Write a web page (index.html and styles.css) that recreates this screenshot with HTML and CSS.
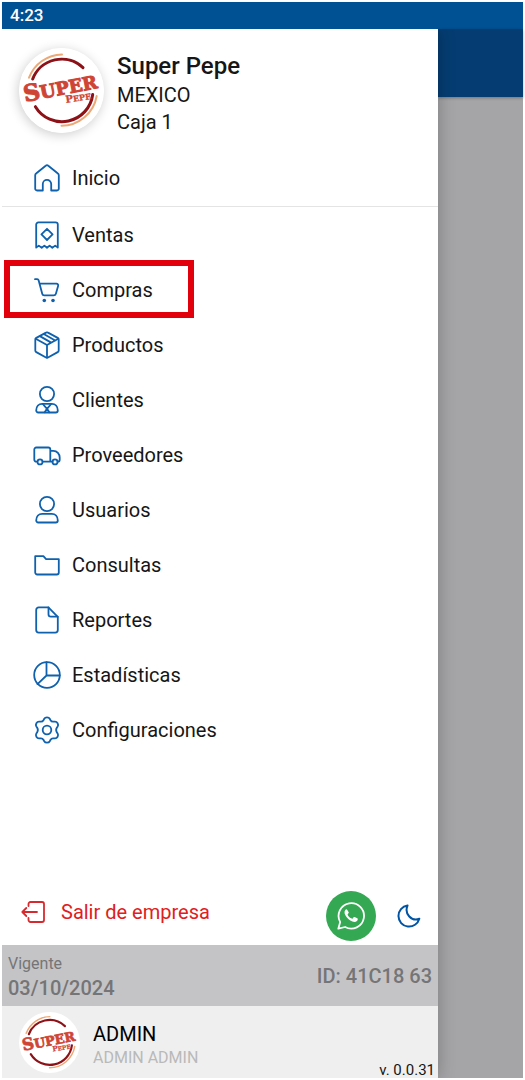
FILE: index.html
```html
<!DOCTYPE html>
<html lang="es">
<head>
  <meta charset="UTF-8">
  <meta name="viewport" content="width=device-width, initial-scale=1.0">
  <title>Super Pepe</title>
  <link rel="stylesheet" href="styles.css">
</head>
<body>

  <div class="screen">
    <div class="status-bar">4:23</div>

    <div class="main">
      <aside class="drawer">
        <header class="company">
          <svg class="company-logo" viewBox="0 0 85 85" role="img" aria-label="Super Pepe">
            <circle cx="42.5" cy="42.5" r="42.5" fill="#fff"/>
            <path class="logo-ring" d="M13.7 31A31 31 0 0 1 64 19.7M16.4 58.7A31 31 0 0 0 73.7 46.5"/>
            <path class="logo-arc" d="M10 29.7A36 36 0 0 1 43 6.4M77.7 48A36 36 0 0 1 42.5 77.8"/>
            <text class="logo-super" transform="translate(6 54) rotate(-11)"><tspan class="logo-cap">S</tspan>UPER</text>
            <text class="logo-pepe" transform="translate(47 55) rotate(-9)"><tspan class="logo-pepe-cap">P</tspan>EPE</text>
          </svg>
          <div class="company-info">
            <h1>Super Pepe</h1>
            <p>MEXICO</p>
            <p>Caja 1</p>
          </div>
        </header>

        <nav class="menu">
          <a class="menu-item first" href="#inicio">
            <svg class="icon" viewBox="0 0 28 28"><path d="M9.8 26.5V20a4.2 4.2 0 0 1 8.4 0v6.5H24a1.8 1.8 0 0 0 1.8-1.8V11.2a2 2 0 0 0-.9-1.7L15.3 1.7a2 2 0 0 0-2.6 0L3.1 9.5a2 2 0 0 0-.9 1.7v13.5A1.8 1.8 0 0 0 4 26.5z"/></svg>
            Inicio
          </a>
          <a class="menu-item" href="#ventas">
            <svg class="icon" viewBox="0 0 28 28"><path d="M3.2 26.6V3.6a2.2 2.2 0 0 1 2.2-2.2h17.2a2.2 2.2 0 0 1 2.2 2.2v23l-2.6-2-2.9 2.2-2.7-2.2-2.6 2.2-2.6-2.2-2.7 2.2-2.9-2.2z"/><path d="M10.2 11.6 14 7.8l3.8 3.8M10.2 15.2 14 19l3.8-3.8M10.2 11.6l-1.8 1.8 1.8 1.8M17.8 11.6l1.8 1.8-1.8 1.8"/></svg>
            Ventas
          </a>
          <a class="menu-item highlighted" href="#compras">
            <svg class="icon" viewBox="0 0 28 28"><path d="M2 3.2h2.2a1.5 1.5 0 0 1 1.4 1.1L9.3 18a1.9 1.9 0 0 0 1.8 1.4h9.5a2.4 2.4 0 0 0 2.3-1.7l2.2-7.8a1.7 1.7 0 0 0-1.6-2.2H6.6"/><circle class="solid" cx="11.3" cy="24.5" r="1.8"/><circle class="solid" cx="20" cy="24.5" r="1.8"/></svg>
            Compras
          </a>
          <a class="menu-item" href="#productos">
            <svg class="icon" viewBox="0 0 28 28"><path d="M13 1.6a2 2 0 0 1 2 0l9.7 5.3a2 2 0 0 1 1 1.7v10.8a2 2 0 0 1-1 1.7L15 26.5a2 2 0 0 1-2 0l-9.700-5.400a2 2 0 0 1-1-1.700V8.600a2 2 0 0 1 1-1.700z"/><path d="M2.700 7.700 14 14l11.300-6.300M14 14v12.500M7.300 5.400l10.900 6.200M11.200 3.300l11 6.200"/></svg>
            Productos
          </a>
          <a class="menu-item" href="#clientes">
            <svg class="icon" viewBox="0 0 28 28"><circle cx="14" cy="8" r="7.100"/><path d="M3.200 24.500c0-4 2.500-6.700 6-6.700h9.600c3.500 0 6 2.700 6 6.700a2 2 0 0 1-2 2H5.200a2 2 0 0 1-2-2z"/><path d="M9.800 18c1.800 2 5 5 6.600 8.300M18.200 18c-1.800 2-5 5-6.600 8.300"/></svg>
            Clientes
          </a>
          <a class="menu-item" href="#proveedores">
            <svg class="icon" viewBox="0 0 28 28"><path d="M4.300 20.700h-1a2 2 0 0 1-2-2V8.500a2 2 0 0 1 2-2h12a2 2 0 0 1 2 2v12.200H9.700M17.300 9.800h3.200c3.500 0 6.200 3.400 6.200 6.700v2.200a2 2 0 0 1-2 2M19.500 20.700h-2.200"/><circle cx="7" cy="20.900" r="2.500"/><circle cx="22" cy="20.900" r="2.500"/></svg>
            Proveedores
          </a>
          <a class="menu-item" href="#usuarios">
            <svg class="icon" viewBox="0 0 28 28"><circle cx="14" cy="8" r="7.100"/><path d="M3.200 24.500c0-4 2.500-6.700 6-6.700h9.600c3.500 0 6 2.700 6 6.700a2 2 0 0 1-2 2H5.200a2 2 0 0 1-2-2z"/></svg>
            Usuarios
          </a>
          <a class="menu-item" href="#consultas">
            <svg class="icon" viewBox="0 0 28 28"><path d="M2.200 5.200h8.200l2.700 2.900h12.700v13.400a2 2 0 0 1-2 2H4.200a2 2 0 0 1-2-2z"/></svg>
            Consultas
          </a>
          <a class="menu-item" href="#reportes">
            <svg class="icon" viewBox="0 0 28 28"><path d="M5.700 1.400h9.700l9.400 9.400v13.300a2.500 2.500 0 0 1-2.500 2.500H5.700a2.500 2.500 0 0 1-2.500-2.500V3.900a2.500 2.500 0 0 1 2.500-2.500z"/><path d="M15.500 1.500v6.800a2.400 2.400 0 0 0 2.400 2.400h6.800"/></svg>
            Reportes
          </a>
          <a class="menu-item" href="#estadisticas">
            <svg class="icon" viewBox="0 0 28 28"><circle cx="14" cy="14" r="12.800"/><path d="M13.500 1.200v13.300h13.200M13.500 14.500l-9 8.600"/></svg>
            Estadísticas
          </a>
          <a class="menu-item" href="#configuraciones">
            <svg class="icon" viewBox="0 0 28 28"><path d="M11.200 2.800c1.100-2 4.500-2 5.600 0l.6 1.200c.6 1.100 1.800 1.800 3 1.700l1.500-.1c2.300-.1 4 2.800 2.800 4.800l-.8 1.200a4.400 4.400 0 0 0 0 4.800l.8 1.200c1.200 2-.5 4.900-2.800 4.800l-1.500-.1c-1.200-.1-2.400.6-3 1.700l-.6 1.200c-1.100 2-4.500 2-5.600 0l-.6-1.200c-.6-1.100-1.800-1.800-3-1.700l-1.500.1c-2.300.1-4-2.800-2.800-4.800l.8-1.200a4.400 4.400 0 0 0 0-4.800l-.8-1.200c-1.200-2 .5-4.900 2.800-4.800l1.500.1c1.200.1 2.400-.6 3-1.700z"/><circle cx="14" cy="14" r="4.300"/></svg>
            Configuraciones
          </a>
        </nav>

        <div class="actions">
          <button type="button" class="logout">
            <svg class="icon icon-logout" viewBox="0 0 24 24"><path d="M7.500 6V4a2 2 0 0 1 2-2H21a2 2 0 0 1 2 2v16a2 2 0 0 1-2 2H9.500a2 2 0 0 1-2-2v-2M16 12H1.300M5.300 8l-4 4 4 4"/></svg>
            Salir de empresa
          </button>
          <a class="whatsapp" href="#whatsapp" aria-label="WhatsApp">
            <svg class="icon" viewBox="0 0 28 28"><path d="M1.300 26.700l1.900-6.600A12.700 12.700 0 1 1 8.100 25z"/><path class="solid" d="M10.300 8c-.5-1-1.400-.8-2 0-1.500 1.800-.8 4.300 1.200 6.900 2.300 3 5.200 4.900 8 5 1.900 0 3.300-1.200 3.300-2.900 0-.4-.2-.6-.6-.8l-2.500-1.200c-.5-.2-.8-.1-1.100.3l-.9 1.100c-.3.400-.6.400-1 .2-1.700-.8-3-2-4-3.700-.2-.4-.1-.7.2-1l.7-.8c.2-.3.200-.6.100-.9z"/></svg>
          </a>
          <button type="button" class="theme" aria-label="Modo oscuro">
            <svg class="icon" viewBox="0 0 24 24"><path d="M10.500 1.500a10.600 10.600 0 1 0 11.800 13.200c-7.500 3.200-15.300-4.800-11.800-13.200z"/></svg>
          </button>
        </div>

        <div class="license">
          <div>
            <div class="license-label">Vigente</div>
            <div class="license-value">03/10/2024</div>
          </div>
          <div class="license-value">ID: 41C18 63</div>
        </div>

        <footer class="user">
          <svg class="user-logo" viewBox="0 0 85 85" role="img" aria-label="Super Pepe">
            <circle cx="42.5" cy="42.5" r="42.5" fill="#fff"/>
            <path class="logo-ring" d="M13.7 31A31 31 0 0 1 64 19.7M16.4 58.7A31 31 0 0 0 73.7 46.5"/>
            <path class="logo-arc" d="M10 29.7A36 36 0 0 1 43 6.4M77.7 48A36 36 0 0 1 42.5 77.8"/>
            <text class="logo-super" transform="translate(6 54) rotate(-11)"><tspan class="logo-cap">S</tspan>UPER</text>
            <text class="logo-pepe" transform="translate(47 55) rotate(-9)"><tspan class="logo-pepe-cap">P</tspan>EPE</text>
          </svg>
          <div class="user-info">
            <div class="user-name">ADMIN</div>
            <div class="user-role">ADMIN ADMIN</div>
          </div>
          <div class="version">v. 0.0.31</div>
        </footer>
      </aside>

      <div class="backdrop">
        <div class="app-bar"></div>
      </div>
    </div>
  </div>

</body>
</html>
```
FILE: styles.css
```css
/* Global styles */
* {
  margin: 0;
  padding: 0;
  box-sizing: border-box;
}

body {
  background: #fff;
  color: #161616;
  font-family: Roboto, 'Liberation Sans', sans-serif;
  font-size: 20px;
  min-height: 100vh;
  padding: 2px;
}

a,
button {
  color: inherit;
  font: inherit;
  text-decoration: none;
}

button {
  background: none;
  border: none;
  cursor: pointer;
}

.screen {
  display: flex;
  flex-direction: column;
  min-height: calc(100vh - 4px);
}

.status-bar {
  background-color: #005193;
  color: #fff;
  font-size: 17px;
  font-weight: 500;
  line-height: 27px;
  padding: 0 8px;
}

.main {
  display: flex;
  flex: 1;
}

/* Drawer */
.drawer {
  display: flex;
  flex-direction: column;
  width: 84%;
  max-width: 436px;
  background-color: #fff;
  box-shadow: 0 0 16px rgba(0, 0, 0, 0.25);
  clip-path: inset(0 -24px 0 0);
  z-index: 1;
}

.company {
  display: flex;
  align-items: flex-start;
  gap: 13px;
  padding: 19px 17px 14px;
}

.company-logo {
  width: 85px;
  height: 85px;
  border-radius: 50%;
  box-shadow: -1px 2px 12px rgba(0, 0, 0, 0.2);
}

.company-info {
  padding-top: 2px;
}

.company h1 {
  font-size: 24px;
  font-weight: 500;
  line-height: 32px;
}

.company p {
  font-size: 20px;
  line-height: 27px;
}

/* Logo */
.logo-ring,
.logo-arc {
  fill: none;
  stroke: #8c1218;
  stroke-width: 3;
  stroke-linecap: round;
}

.logo-arc {
  stroke: #eda877;
  stroke-width: 2;
}

.logo-super,
.logo-pepe {
  fill: #cf4535;
  stroke: #cf4535;
  stroke-width: 1;
  font-family: 'DejaVu Serif', serif;
  font-size: 18px;
  font-weight: bold;
}

.logo-cap {
  font-size: 23px;
}

.logo-pepe {
  stroke-width: 0.3;
  font-size: 8px;
}

.logo-pepe-cap {
  font-size: 10px;
}

/* Icons */
.icon {
  width: 28px;
  height: 28px;
  flex-shrink: 0;
  fill: none;
  stroke: #0f61ae;
  stroke-width: 1.8;
  stroke-linecap: round;
  stroke-linejoin: round;
}

.icon .solid {
  fill: #0f61ae;
  stroke: none;
}

/* Menu */
.menu {
  flex: 1;
}

.menu-item {
  position: relative;
  display: flex;
  align-items: center;
  gap: 11px;
  height: 55px;
  padding: 0 31px;
}

.menu-item.first {
  height: 57px;
  border-bottom: 1px solid #e4e4e4;
}

.menu-item.highlighted::after {
  content: '';
  position: absolute;
  top: -2px;
  left: 2px;
  box-sizing: border-box;
  width: 190px;
  height: 58px;
  border: 6px solid #e1000b;
}

/* Bottom actions */
.actions {
  display: flex;
  align-items: center;
  padding: 4px 17px 4px 19px;
}

.logout {
  display: flex;
  align-items: center;
  gap: 16px;
  margin-right: auto;
  padding-bottom: 8px;
  color: #e02020;
}

.icon-logout {
  width: 24px;
  height: 24px;
  stroke: #d62a2e;
}

.whatsapp {
  display: flex;
  align-items: center;
  justify-content: center;
  width: 50px;
  height: 50px;
  margin-right: 21px;
  border-radius: 50%;
  background-color: #34a853;
}

.whatsapp .icon {
  stroke: #fff;
}

.whatsapp .icon .solid {
  fill: #fff;
}

.theme {
  display: flex;
}

.theme .icon {
  width: 24px;
  height: 24px;
  stroke: #0054a4;
  stroke-width: 2;
}

/* License bar */
.license {
  display: flex;
  align-items: center;
  justify-content: space-between;
  height: 61px;
  padding: 0 6px;
  background-color: #c4c4c6;
  color: #757577;
}

.license-label {
  font-size: 16px;
  line-height: 24px;
}

.license-value {
  font-size: 20px;
  font-weight: 500;
  line-height: 24px;
}

/* User bar */
.user {
  display: flex;
  align-items: center;
  gap: 13px;
  height: 72px;
  padding: 0 3px 0 17px;
  background-color: #efefef;
}

.user-logo {
  width: 61px;
  height: 61px;
}

.user-info {
  padding-top: 8px;
}

.user-name {
  color: #000;
  font-size: 20px;
  line-height: 24px;
}

.user-role {
  color: #b9b9b9;
  font-size: 16px;
  line-height: 24px;
}

.version {
  align-self: flex-end;
  margin-left: auto;
  font-size: 15px;
  line-height: 16px;
}

/* Dimmed page behind the drawer */
.backdrop {
  flex: 1;
  background-color: #a5a5a7;
}

.app-bar {
  height: 68px;
  background-color: #053d72;
  box-shadow: 0 1px 3px rgba(0, 0, 0, 0.3);
}
```
